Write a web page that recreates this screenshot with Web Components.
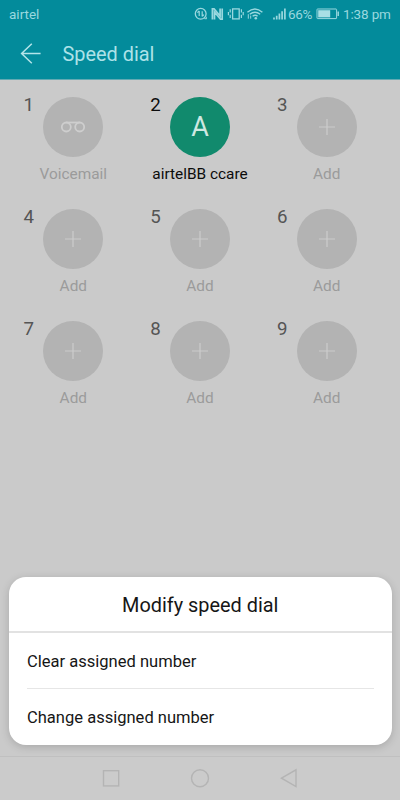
<!DOCTYPE html>
<html lang="en">
<head>
<meta charset="utf-8">
<title>Speed dial</title>
<style>
html, body { margin: 0; height: 100%; overflow: hidden; background: #cacaca; }
body { font-family: Roboto, "Liberation Sans", sans-serif; }
</style>
</head>
<body>
<phone-screen>
  <status-bar slot="top" carrier="airtel" battery="66%" time="1:38 pm"></status-bar>
  <app-bar slot="top">Speed dial</app-bar>
  <speed-dial-grid>
    <dial-slot number="1" kind="voicemail">Voicemail</dial-slot>
    <dial-slot number="2" kind="contact" initial="A">airtelBB ccare</dial-slot>
    <dial-slot number="3">Add</dial-slot>
    <dial-slot number="4">Add</dial-slot>
    <dial-slot number="5">Add</dial-slot>
    <dial-slot number="6">Add</dial-slot>
    <dial-slot number="7">Add</dial-slot>
    <dial-slot number="8">Add</dial-slot>
    <dial-slot number="9">Add</dial-slot>
  </speed-dial-grid>
  <bottom-sheet slot="overlay" heading="Modify speed dial">
    <sheet-option>Clear assigned number</sheet-option>
    <sheet-option>Change assigned number</sheet-option>
  </bottom-sheet>
  <nav-bar slot="bottom"></nav-bar>
</phone-screen>
<script>
function define(name, render) {
  customElements.define(name, class extends HTMLElement {
    connectedCallback() {
      if (!this.shadowRoot) this.attachShadow({ mode: 'open' }).innerHTML = render(this);
    }
  });
}

define('phone-screen', () => `
<style>
:host { display: flex; flex-direction: column; position: relative; width: 400px; height: 800px; overflow: hidden; background: #cacaca; }
.top { background: #038b9b; height: 79px; flex: none; box-shadow: 0 1px 0 #62aab3; }
main { flex: 1; padding-top: 17.5px; }
.overlay { position: absolute; left: 9px; right: 8.5px; bottom: 55.5px; }
</style>
<header class="top"><slot name="top"></slot></header>
<main><slot></slot></main>
<slot name="bottom"></slot>
<div class="overlay"><slot name="overlay"></slot></div>`);

define('status-bar', el => `
<style>
:host { display: flex; align-items: center; height: 28px; padding: 0 0 0 9px; box-sizing: border-box; color: #9ad8df; font-size: 13.5px; line-height: 28px; white-space: nowrap; }
.carrier { flex: 1; }
svg { display: block; flex: none; }
.time { width: 57px; margin-left: 4px; font-size: 13.5px; letter-spacing: -.15px; }
.battery { width: 26px; font-size: 13.5px; letter-spacing: -.3px; }
</style>
<span class="carrier">${el.getAttribute('carrier')}</span>
<svg width="95" height="20" viewBox="193 4 95 20" fill="none" stroke="#9ad8df" stroke-width="1.3">
  <circle cx="200.7" cy="13.8" r="5.4"/>
  <path d="M199.2 11v5m-1.8-3.4 1.8-1.8M202.2 11.2v5.2m1.7-1.8-1.7 1.8" stroke-width="1.2"/>
  <path d="M204.3 18.6l2.2.2-.4-2.2" stroke-width="1"/>
  <path d="M212.4 19.4V8.8h1.7l6 7.2V8.5M222.2 8.5v10.7h-1.7l-6-7.2v7.5" stroke-width="1.7"/>
  <rect x="232.6" y="8.9" width="6.6" height="10"/>
  <path d="M230.2 9.2v3.4M230.2 14.8v3.2M228.4 12v3.2M241.4 9.2v3.4M241.4 14.8v3.2M243.2 12v3.2" stroke-width="1.2"/>
  <path d="M247.4 12.3q7.5-6.6 15 0M249.8 14.3q5.2-4.2 10.4 0M252.6 16.2q2.6-2 5 0" stroke-width="1.4"/>
  <circle cx="255.8" cy="18.3" r="1.3" fill="#9ad8df" stroke="none"/>
  <path d="M248.3 14.2v4.5M250.7 15.6v3.1" stroke-width="1"/>
  <path d="M274 17.4v2M276.7 15.8v3.6M279.4 13.5v5.9M282.1 11.2v8.2M284.9 8.6v10.8" stroke-width="1.7"/>
</svg>
<span class="battery">${el.getAttribute('battery')}</span>
<svg width="25" height="14" viewBox="314 7 25 14">
  <rect x="317" y="9" width="19.6" height="9.6" rx=".6" fill="none" stroke="#9ad8df" stroke-width="1"/>
  <rect x="318.2" y="10.2" width="12" height="7.2" fill="#a9dfe5"/>
  <path d="M338.2 11.5v4.6" stroke="#9ad8df" stroke-width="1.5"/>
</svg>
<span class="time">${el.getAttribute('time')}</span>`);

define('app-bar', () => `
<style>
:host { display: flex; align-items: center; height: 52px; padding-left: 20px; box-sizing: border-box; color: #ade2e8; font-size: 19.9px; line-height: 52px; }
svg { margin-right: 20.5px; }
span { padding-top: 1px; }
</style>
<svg width="22" height="22" viewBox="0 0 22 22" fill="none" stroke="#b4e4e9" stroke-width="1.5"><path d="M20.6 10.5H1.8M11.8.8 1.6 10.5l10.2 9.8"/></svg>
<span><slot></slot></span>`);

define('speed-dial-grid', () => `
<style>
:host { display: grid; grid-template-columns: repeat(3, 126.7px); grid-auto-rows: 112.2px; justify-content: center; }
</style><slot></slot>`);

define('dial-slot', el => {
  const kind = el.getAttribute('kind') || 'add';
  const faces = {
    add: '<svg width="18" height="18" viewBox="0 0 18 18" fill="none" stroke="#cccccc" stroke-width="1.2"><path d="M9 1v16M1 9h16"/></svg>',
    voicemail: '<svg width="26" height="14" viewBox="0 0 26 14" fill="none" stroke="#cecece" stroke-width="1.8"><circle cx="6.3" cy="7" r="4.5"/><circle cx="19.7" cy="7" r="4.5"/><path d="M6.3 2.5h13.4"/></svg>',
    contact: `<span>${el.getAttribute('initial')}</span>`
  };
  const active = kind === 'contact';
  return `
<style>
:host { display: grid; grid-template-columns: 1fr 60px 1fr; grid-template-rows: 60px 1fr; }
.number { justify-self: end; margin-right: 9.3px; font-size: 18.7px; line-height: 17px; color: ${active ? '#0c0c0c' : '#555'}; }
.face { display: grid; place-items: center; width: 60px; height: 60px; border-radius: 50%; background: ${active ? '#118a6d' : '#b3b3b3'}; color: #cee8e1; font-size: 27px; }
.face span { padding-top: 1px; }
.label { grid-column: 1 / -1; text-align: center; margin-top: 8px; font-size: 15.4px; line-height: 18px; color: ${active ? '#0c0c0c' : '#9b9b9b'}; }
</style>
<span class="number">${el.getAttribute('number')}</span>
<div class="face">${faces[kind]}</div>
<div class="label"><slot></slot></div>`;
});

define('bottom-sheet', el => `
<style>
:host { display: block; height: 167.5px; border-radius: 17px; background: #fff; overflow: hidden; box-shadow: 0 2px 9px rgba(0,0,0,.17); }
h1 { margin: 0; height: 54px; line-height: 57px; border-bottom: 2px solid #e2e2e2; font-weight: 400; font-size: 19.9px; text-align: center; color: #161616; }
.list { display: flex; flex-direction: column; padding: 0 18px; }
::slotted(:not(:last-child)) { border-bottom: 1px solid #e6e6e6; }
</style>
<h1>${el.getAttribute('heading')}</h1>
<div class="list"><slot></slot></div>`);

define('sheet-option', () => `
<style>:host { display: block; height: 55px; line-height: 57px; font-size: 16.55px; color: #161616; }</style><slot></slot>`);

define('nav-bar', () => `
<style>
:host { display: flex; flex: none; justify-content: center; gap: 65px; align-items: center; height: 44px; box-sizing: border-box; border-top: 1px solid #c0c0c0; background: #cbcbcb; }
svg { display: block; }
</style>
<svg width="24" height="24" viewBox="99 766.5 24 24" fill="none" stroke="#b4b4b4" stroke-width="1.4"><rect x="103.5" y="770.2" width="15.2" height="15.2"/></svg>
<svg width="24" height="24" viewBox="188 766.5 24 24" fill="none" stroke="#b4b4b4" stroke-width="1.4"><circle cx="200" cy="777.7" r="8.5"/></svg>
<svg width="24" height="24" viewBox="277 766.5 24 24" fill="none" stroke="#b4b4b4" stroke-width="1.4"><path d="M281.5 777.7 296 769.3v16.8z"/></svg>`);
</script>
</body>
</html>
